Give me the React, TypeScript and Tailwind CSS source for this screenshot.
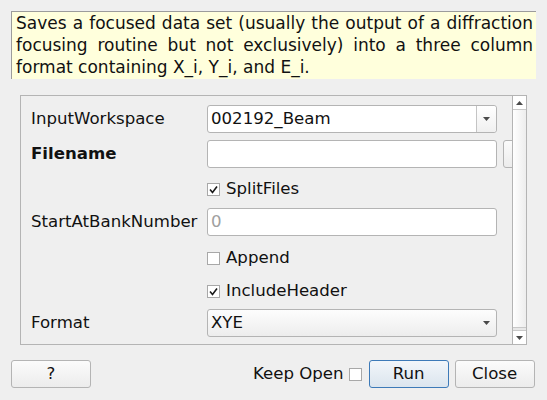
import React from "react";

function Arrow({ up = false }: { up?: boolean }) {
  return (
    <svg width="7" height="4" viewBox="0 0 7 4" className="block">
      {up ? (
        <polygon points="0,4 7,4 3.5,0" fill="#4a4a4a" />
      ) : (
        <polygon points="0,0 7,0 3.5,4" fill="#4a4a4a" />
      )}
    </svg>
  );
}

function Check({ checked }: { checked: boolean }) {
  return (
    <div className="w-[13px] h-[13px] border border-[#a8a8a8] bg-white flex items-center justify-center shrink-0">
      {checked && (
        <svg width="11" height="11" viewBox="0 0 11 11" className="block">
          <path d="M2 5.5 L4.5 8.5 L9 2.5" fill="none" stroke="#1a1a1a" strokeWidth="1.6" />
        </svg>
      )}
    </div>
  );
}

function Label({ children, bold = false }: { children: React.ReactNode; bold?: boolean }) {
  return <div className={`w-[176px] shrink-0 ${bold ? "font-bold" : ""}`}>{children}</div>;
}

function CheckRow({ text, checked, mt }: { text: string; checked: boolean; mt: string }) {
  return (
    <div className={`flex items-center h-[20px] ${mt}`}>
      <div className="w-[176px] shrink-0" />
      <Check checked={checked} />
      <span className="ml-[6px]">{text}</span>
    </div>
  );
}

export default function App() {
  return (
    <div className="w-[547px] h-[400px] bg-[#efefef] overflow-hidden font-['DejaVu_Sans',sans-serif] text-[16.6px] text-[#111]">
      <div className="ml-[11px] mt-[11px] w-[525px] h-[68px] border-l border-t border-[#9c9c9c] bg-[#ffffdc] pl-[4px] pr-[3px] text-justify text-[17px] leading-[22px]">
        Saves a focused data set (usually the output of a diffraction focusing routine but not exclusively) into a three column format containing X_i, Y_i, and E_i.
      </div>

      <div className="ml-[20px] mt-[16px] w-[507px] h-[250px] border border-[#b4b4b4] flex">
        <div className="w-[491px] overflow-hidden pl-[10px] pt-[9px]">
          <div className="flex items-center h-[28px] w-[600px]">
            <Label>InputWorkspace</Label>
            <div className="w-[290px] h-[28px] border border-[#b4b4b4] rounded-[3px] bg-white flex">
              <div className="flex-1 pl-[3px] flex items-center">002192_Beam</div>
              <div className="w-[20px] border-l border-[#c4c4c4] bg-gradient-to-b from-white to-[#f0f0f0] rounded-r-[3px] flex items-center justify-center">
                <Arrow />
              </div>
            </div>
          </div>

          <div className="flex items-center h-[28px] mt-[7px] w-[600px]">
            <Label bold>Filename</Label>
            <div className="w-[290px] h-[28px] border border-[#b4b4b4] rounded-[3px] bg-white" />
            <div className="ml-[6px] w-[40px] h-[28px] border border-[#b4b4b4] rounded-[3px] bg-gradient-to-b from-[#fbfbfb] to-[#ececec]" />
          </div>

          <CheckRow text="SplitFiles" checked={true} mt="mt-[11px]" />

          <div className="flex items-center h-[28px] mt-[9px] w-[600px]">
            <Label>StartAtBankNumber</Label>
            <div className="w-[290px] h-[28px] border border-[#b4b4b4] rounded-[3px] bg-white pl-[3px] flex items-center text-[#a0a0a0]">
              0
            </div>
          </div>

          <CheckRow text="Append" checked={false} mt="mt-[12px]" />
          <CheckRow text="IncludeHeader" checked={true} mt="mt-[13px]" />

          <div className="flex items-center h-[28px] mt-[8px] w-[600px]">
            <Label>Format</Label>
            <div className="w-[290px] h-[28px] border border-[#b4b4b4] rounded-[3px] bg-gradient-to-b from-[#fdfdfd] to-[#ededed] flex items-center">
              <div className="flex-1 pl-[3px]">XYE</div>
              <div className="w-[20px] flex items-center justify-center">
                <Arrow />
              </div>
            </div>
          </div>
        </div>

        <div className="w-[14px] border-l border-[#b4b4b4] flex flex-col bg-[#f4f4f4]">
          <div className="h-[14px] border-b border-[#c8c8c8] bg-white flex items-center justify-center">
            <Arrow up />
          </div>
          <div className="flex-1 bg-gradient-to-r from-white to-[#ededed] border-b border-[#c8c8c8]" />
          <div className="h-[3px] bg-[#e8e8e8] border-b border-[#c8c8c8]" />
          <div className="h-[13px] bg-white flex items-center justify-center">
            <Arrow />
          </div>
        </div>
      </div>

      <div className="mt-[15px] flex items-center h-[28px] pl-[11px]">
        <button className="w-[80px] h-[28px] border border-[#b4b4b4] rounded-[3px] bg-gradient-to-b from-[#fbfbfb] to-[#ececec] text-[16.6px]">
          ?
        </button>
        <span className="ml-[162px]">Keep Open</span>
        <div className="ml-[5px]">
          <Check checked={false} />
        </div>
        <button className="ml-[7px] w-[80px] h-[28px] border border-[#3d7ab8] rounded-[3px] bg-gradient-to-b from-[#f2f6fa] to-[#dbe5ee] text-[16.6px]">
          Run
        </button>
        <button className="ml-[6px] w-[80px] h-[28px] border border-[#b4b4b4] rounded-[3px] bg-gradient-to-b from-[#fbfbfb] to-[#ececec] text-[16.6px]">
          Close
        </button>
      </div>
    </div>
  );
}
